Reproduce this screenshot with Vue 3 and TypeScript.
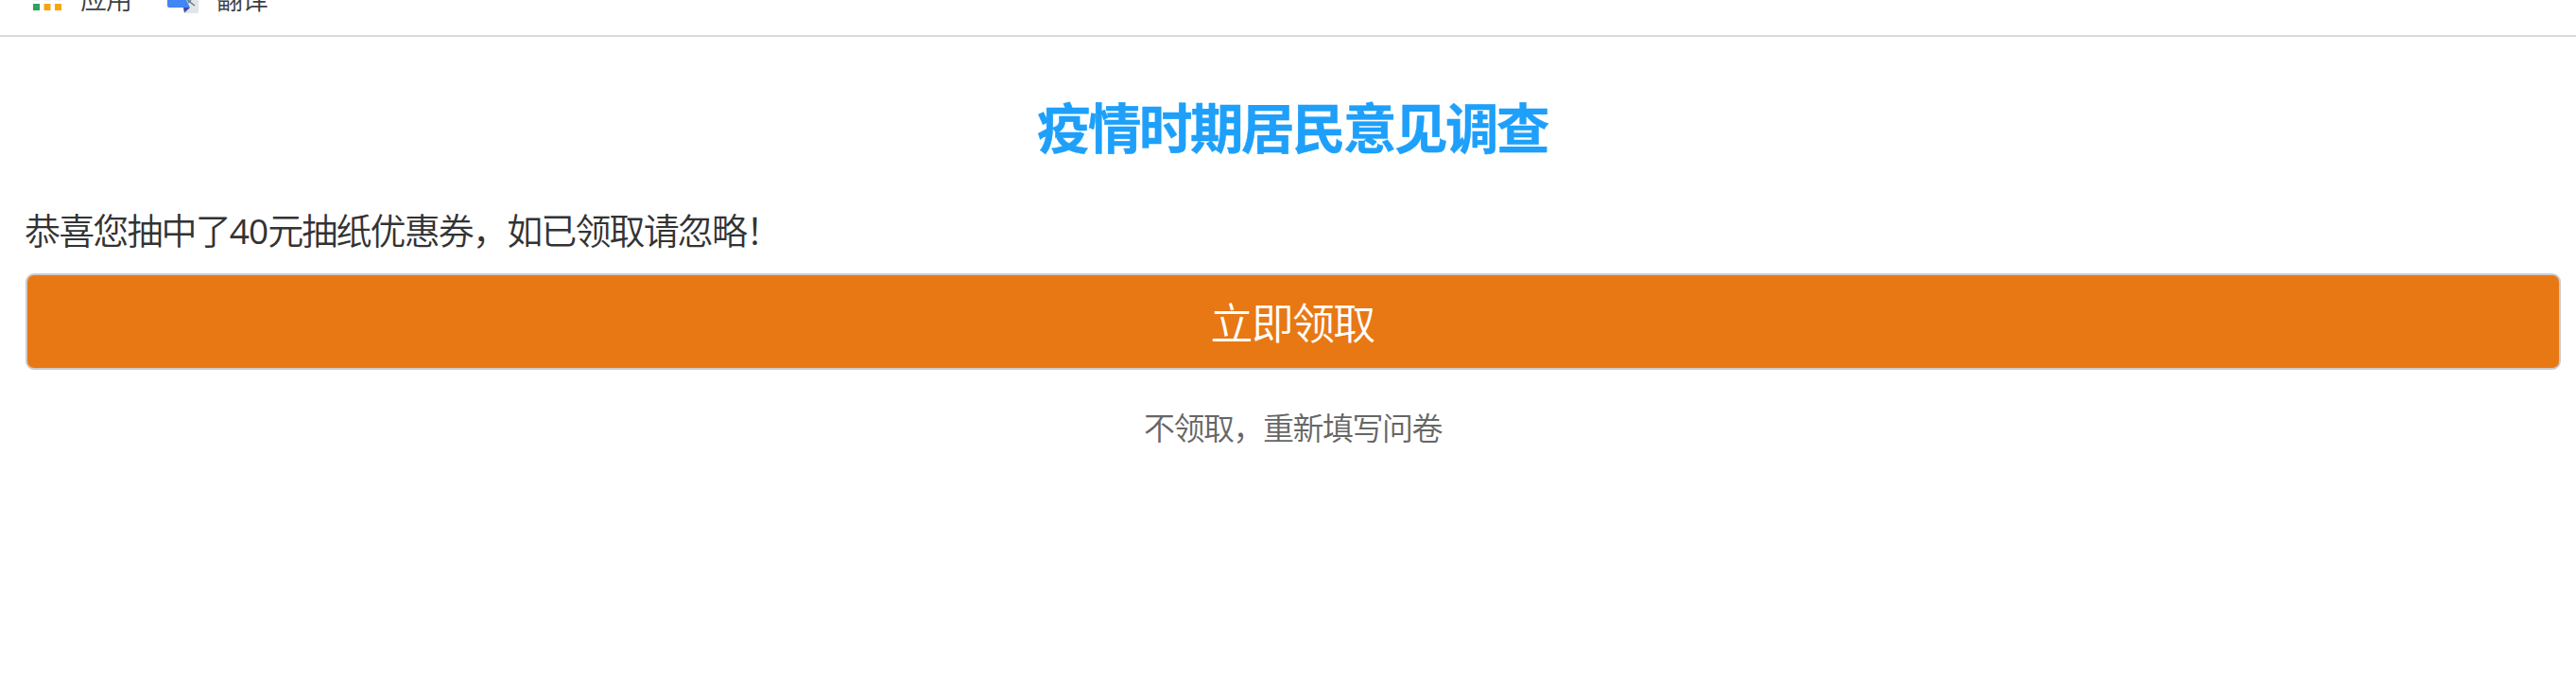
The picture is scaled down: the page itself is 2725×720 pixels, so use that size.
<script setup lang="ts">
const title = '疫情时期居民意见调查'
const amount = 40
</script>

<template>
  <div class="page">
    <nav class="bookmarks">
      <svg class="apps" width="30" height="12" viewBox="0 0 30 12">
        <path d="M0 0H7M11.500 0H18.500M23 0H30" stroke="#dfe5f5" stroke-width="1" />
        <rect x="0" y="4" width="7" height="7" fill="#31a25c" />
        <rect x="11.5" y="4" width="7" height="7" fill="#f6a60d" />
        <rect x="23" y="4" width="7" height="7" fill="#f6a60d" />
      </svg>
      <span class="label apps-label">应用</span>
      <svg class="translate" width="34" height="14" viewBox="0 0 34 14">
        <path d="M14 0H33V12.500Q33 14 31.500 14H18Z" fill="#e3e4e6" />
        <path d="M21 0L29 6M22 3L25 0" fill="none" stroke="#607d86" stroke-width="1.500" />
        <path d="M0 0H20L24 8H2Q0 8 0 6Z" fill="#4285f4" />
        <path d="M17 8H24L18 13.500Z" fill="#3949ab" />
      </svg>
      <span class="label">翻译</span>
    </nav>
    <main class="content">
      <h1 class="title">{{ title }}</h1>
      <p class="message">恭喜您抽中了<span class="amount">{{ amount }}</span>元抽纸优惠券，如已领取请忽略！</p>
      <button class="claim" type="button"><span>立即领取</span></button>
      <a class="skip">不领取，重新填写问卷</a>
    </main>
  </div>
</template>

<style>
body {
  background: #fff;
}
</style>

<style scoped>
.page {
  height: 720px;
  overflow: hidden;
  background: #fff;
  font-family: "Noto Sans CJK SC", sans-serif;
}
.bookmarks {
  display: flex;
  align-items: flex-start;
  box-sizing: border-box;
  height: 39px;
  padding-left: 35px;
  border-bottom: 2px solid #dadae0;
  overflow: hidden;
}
.apps {
  margin-right: 20px;
}
.label {
  margin-top: -17px;
  font-size: 28px;
  font-weight: 350;
  line-height: 30px;
  letter-spacing: -1px;
  color: #3c4043;
}
.apps-label {
  margin-right: 38px;
}
.translate {
  margin-right: 18px;
}
.content {
  display: flex;
  flex-direction: column;
  padding: 0 16px 0 27px;
}
.title {
  margin: 53px 0 0;
  padding-right: 2px;
  font-size: 56.500px;
  line-height: 80px;
  letter-spacing: -2.500px;
  font-weight: 700;
  text-align: center;
  color: #1ea0fa;
  -webkit-text-stroke: 0.4px #1ea0fa;
}
.message {
  height: 60px;
  margin: 41px 0 0 -1px;
  font-family: "Open Sans", "Noto Sans CJK SC", sans-serif;
  font-size: 38px;
  font-weight: 350;
  line-height: 60px;
  letter-spacing: -1.860px;
  color: #333;
}
.amount {
  font-size: 37px;
  font-weight: 400;
  line-height: 1;
  letter-spacing: -1px;
}
.claim {
  display: flex;
  align-items: center;
  justify-content: center;
  box-sizing: border-box;
  height: 102px;
  margin: 16px 0 0;
  padding: 0 2px 1px 0;
  border: 2px solid #ccc;
  border-radius: 9px;
  background: #e87814;
  color: #fff;
  font-family: inherit;
  font-size: 45px;
  font-weight: 350;
  line-height: 60px;
  letter-spacing: -1.800px;
}
.skip {
  margin-top: 36px;
  padding-right: 1px;
  font-size: 33px;
  font-weight: 350;
  line-height: 48px;
  letter-spacing: -1.500px;
  text-align: center;
  color: #666;
}
</style>
